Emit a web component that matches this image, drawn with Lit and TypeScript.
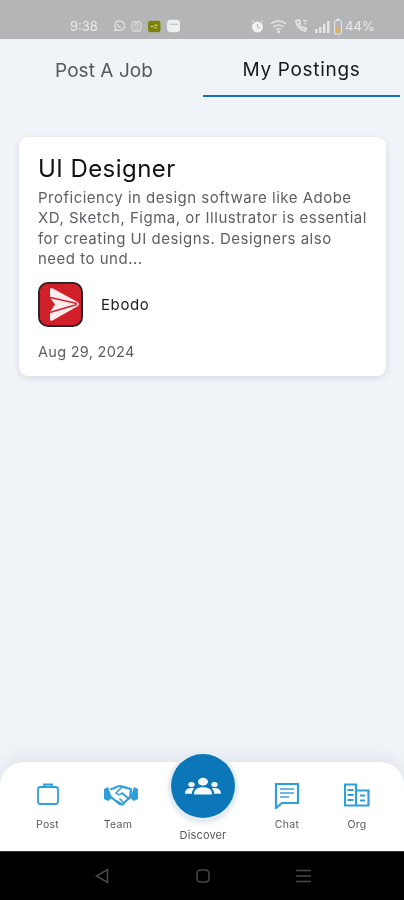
import { LitElement, html, css } from "lit";
import { customElement } from "lit/decorators.js";

@customElement("app-root")
export class AppRoot extends LitElement {
  static styles = css`
    :host { display: block; width: 404px; height: 900px; font-family: Inter, "Noto Sans", sans-serif; }
    .page { width: 404px; height: 900px; background: #f0f3f8; display: flex; flex-direction: column; overflow: hidden; filter: blur(.35px); }
    .status { height: 39px; flex: none; background: #b4b5b7; display: flex; align-items: center; color: #e9eaec; font-size: 13px; padding: 13px 0 0 70px; box-sizing: border-box; }
    .status .time { width: 30px; }
    .sl { display: flex; align-items: center; gap: 6px; margin-left: 13px; width: 67px; }
    .sr { display: flex; align-items: center; margin-left: 71px; }
    .pct { margin-left: 3px; letter-spacing: .15px; }
    .tabs { height: 58px; flex: none; display: grid; grid-template-columns: 203px 197px; font-size: 19px; }
    .tab { display: flex; align-items: center; justify-content: center; color: #55585c; padding: 4px 0 0 5px; letter-spacing: .05px; box-sizing: border-box; }
    .tab.on { color: #17191c; border-bottom: 2px solid #1273ad; padding: 4px 0 0; letter-spacing: .7px; }
    .body { flex: 1; padding: 40px 18px 0 19px; }
    .card { background: #fff; border-radius: 9px; box-shadow: 0 2px 6px rgba(90,100,120,.16); padding: 17px 19px 14px; height: 239px; box-sizing: border-box; }
    h2 { margin: 0; font-size: 24px; font-weight: 400; line-height: 30px; color: #111; letter-spacing: .45px; }
    p { margin: 4px 0 0; font-size: 15px; line-height: 20.4px; color: #5b5f64; width: 332px; letter-spacing: .5px; }
    .co { display: flex; align-items: center; gap: 18px; margin-top: 12px; font-size: 15px; letter-spacing: .6px; color: #1c1e20; }
    .date { margin-top: 15px; font-size: 14.5px; color: #5b5f64; line-height: 20px; letter-spacing: .28px; }
    .nav { height: 89px; flex: none; background: #fff; border-radius: 24px 24px 0 0; position: relative; box-shadow: 0 -6px 14px rgba(120,130,150,.12); display: grid; grid-template-columns: 95px 46px 123px 46px 24px 46px; }
    .item { display: flex; flex-direction: column; align-items: center; color: #55585c; font-size: 10.5px; letter-spacing: .3px; padding-top: 19px; }
    .item svg { height: 28px; margin-bottom: 9px; flex: none; }
    .item span { line-height: 13px; }
    .team-svg { margin-left: 6px; }
    .fab { position: absolute; left: 171px; top: -8px; width: 64px; height: 64px; border-radius: 50%; background: #0b76b8; box-shadow: 0 0 0 3px #e3eef5, 0 3px 6px rgba(60,80,100,.3); display: flex; align-items: center; justify-content: center; }
    .disc { position: absolute; left: 150px; width: 106px; top: 67px; text-align: center; color: #55585c; font-size: 11px; letter-spacing: .15px; line-height: 13px; }
    .sys { height: 49px; flex: none; background: #000; position: relative; border-top: 1px solid #333; box-sizing: border-box; }
    .keys { height: 100%; display: flex; align-items: center; padding-left: 95px; }
    .keys svg { display: block; }
    .k2 { margin-left: 87px; }
    .k3 { margin-left: 86px; }
  `;

  render() {
    return html`<div class="page">
      <div class="status">
        <span class="time">9:38</span>
        <div class="sl">
          <svg width="14" height="14" viewBox="0 0 14 14" fill="none" stroke="#e4e5e7" stroke-width="1.3"><path d="M2 12l.8-2.8A5.4 5.4 0 1 1 5 11.4z"/><path d="M5 5c.4 2 1.6 3.4 4 4"/></svg>
          <svg width="12" height="13" viewBox="0 0 12 13" fill="none" stroke="#dcdde0" stroke-width="1.2"><rect x="1" y="1" width="10" height="11" rx="2.5"/><circle cx="6" cy="5" r="2"/><path d="M3 9.5h6"/></svg>
          <svg width="14" height="13" viewBox="0 0 14 13"><rect width="14" height="13" rx="2.5" fill="#7f8209"/><path d="M3 6.5h3M7 5h4M7 8h3" stroke="#d9dba0" stroke-width="1.2"/></svg>
          <svg width="15" height="14" viewBox="0 0 15 14"><rect width="15" height="14" rx="4.5" fill="#eeeff0"/><path d="M3 5h9" stroke="#b4b5b7" stroke-width="1"/></svg>
        </div>
        <div class="sr">
          <svg width="13" height="13" viewBox="0 0 13 13"><circle cx="6.5" cy="7" r="5.5" fill="#eff0f1"/><path d="M6.5 4v3l2 1" stroke="#a8a9ab" fill="none"/><path d="M1 2l2-1.5M12 2l-2-1.5" stroke="#eff0f1"/></svg>
          <svg style="margin-left:6px" width="17" height="14" viewBox="0 0 17 14" fill="none" stroke="#e4e5e7" stroke-width="1.3"><path d="M1 5c4-4 11-4 15 0M3.5 8c2.5-2.5 7.5-2.5 10 0M6 10.5c1.500-1 3.500-1 5 0"/><circle cx="8.5" cy="12.800" r=".8" fill="#e4e5e7"/></svg>
          <svg style="margin-left:7px" width="15" height="14" viewBox="0 0 15 14" fill="none" stroke="#e4e5e7" stroke-width="1.8"><path d="M2 2c.5 5 4 9 9 10l1-2.5-2.5-1.500-1.300 1C6.500 8 5.500 6.500 5 5l1.200-1.200L5 1z"/><path d="M9 1.500h4M11 1.500v4" stroke-width="1"/></svg>
          <svg style="margin-left:6px" width="18" height="13" viewBox="0 0 18 13" fill="#e4e5e7"><rect x="0" y="9" width="2.5" height="4"/><rect x="4" y="7" width="2.5" height="6"/><rect x="8" y="4" width="2.5" height="9"/><rect x="12" y="1" width="2.5" height="12"/></svg>
          <svg style="margin-left:1px" width="8" height="17" viewBox="0 0 8 17"><rect x=".6" y="2.500" width="6.800" height="13.500" rx="1.500" fill="none" stroke="#e4e5e7" stroke-width="1.1"/><rect x="2.5" y=".5" width="3" height="2" fill="#e4e5e7"/><rect x="2" y="10" width="4" height="4.500" fill="#e0b04a"/></svg>
          <span class="pct">44%</span>
        </div>
      </div>
      <div class="tabs"><div class="tab">Post A Job</div><div class="tab on">My Postings</div></div>
      <div class="body">
        <div class="card">
          <h2>UI Designer</h2>
          <p>Proficiency in design software like Adobe XD, Sketch, Figma, or Illustrator is essential for creating UI designs. Designers also need to und...</p>
          <div class="co">
            <svg width="45" height="45" viewBox="0 0 45 45">
              <rect x=".9" y=".9" width="43.2" height="43.2" rx="9" fill="#d2202a" stroke="#232325" stroke-width="1.8"/>
              <path d="M12 8c0-2 1-2.500 2.500-1.700L39.500 20c2 1.200 2 3 0 4.200L14.500 38.500c-1.500.8-2.500.3-2.500-1.700V30l5-7.500-5-7z" fill="#fbeced"/>
              <path d="M10 15l29 6.500M10 31l29-8.500" stroke="#d2202a" stroke-width="1.4" fill="none"/>
            </svg>
            <span>Ebodo</span>
          </div>
          <div class="date">Aug 29, 2024</div>
        </div>
      </div>
      <div class="nav">
        <div class="item" style="grid-column:1">
          <svg width="24" height="28" viewBox="0 0 24 28" fill="none" stroke="#2f9fdc" stroke-width="1.8"><rect x="2" y="6" width="20" height="17" rx="2.5"/><path d="M8 6V3.500h8V6"/></svg><span>Post</span>
        </div>
        <div class="item" style="grid-column:2">
          <svg class="team-svg" width="34" height="28" viewBox="0 0 34 28" fill="none" stroke="#2f9fdc" stroke-width="2.2" stroke-linejoin="round" stroke-linecap="round"><path d="M0 8l4-2 4 11-4 3-4-2zM34 8l-4-2-4 11 4 3 4-2z" fill="#2f9fdc" stroke="none"/><path d="M7 8c3 0 5-3 9-3 2 0 5 2 11 3l-1 8-7 7c-2 1-4 0-6-2l-6-5"/><path d="M18 6l-6 6c2 2 4 2 6 0l7 6M16 18l3 3M13 20l3 2" stroke-width="1.7"/></svg><span>Team</span>
        </div>
        <div class="item" style="grid-column:4">
          <svg width="26" height="28" viewBox="0 0 26 28" fill="none"><path d="M2 3h22v19H8l-6 5z" stroke="#2f9fdc" stroke-width="2.2"/><path d="M6 8h14M6 12h14M6 16h9" stroke="#6eb8e4" stroke-width="2"/></svg><span>Chat</span>
        </div>
        <div class="item" style="grid-column:6">
          <svg width="26" height="28" viewBox="0 0 26 28" fill="none" stroke="#2f9fdc" stroke-width="2.2"><path d="M1 3.500h11v21H1zM12 9.500h12.500v15H12z"/><path d="M3.500 9h6M3.500 14h6M3.500 19h6M16 14.500h5M16 19.500h5"/></svg><span>Org</span>
        </div>
        <div class="fab">
          <svg width="36" height="19" viewBox="0 0 36 24" preserveAspectRatio="none" fill="#f4f9fc"><circle cx="18" cy="6" r="5"/><circle cx="6.500" cy="9.500" r="3.200"/><circle cx="29.500" cy="9.500" r="3.200"/><path d="M9 22c0-6 3-9 9-9s9 3 9 9z"/><path d="M0 21c0-4 2-7 6.500-7 1.200 0 2 .2 2.800.6C7.500 16 7 18.500 7 21zM36 21c0-4-2-7-6.500-7-1.200 0-2 .2-2.800.6 1.800 1.400 2.300 3.900 2.300 6.400z"/></svg>
        </div>
        <div class="disc">Discover</div>
      </div>
      <div class="sys">
        <div class="keys">
          <svg width="14" height="16" viewBox="0 0 14 16" fill="none" stroke="#4a4a4a" stroke-width="1.5"><path d="M12.500 1.500v13L1.500 8z"/></svg>
          <svg class="k2" width="14" height="14" viewBox="0 0 14 14" fill="none" stroke="#4a4a4a" stroke-width="1.5"><rect x="1" y="1" width="12" height="12" rx="3.500"/></svg>
          <svg class="k3" width="15" height="14" viewBox="0 0 15 14" stroke="#4a4a4a" stroke-width="1.5"><path d="M0 1.500h15M0 7h15M0 12.500h15"/></svg>
        </div>
      </div>
    </div>`;
  }
}
